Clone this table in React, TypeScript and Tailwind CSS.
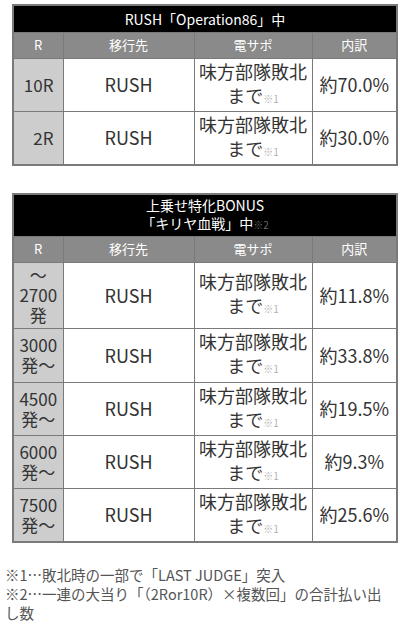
import React from "react";

const font = { fontFamily: '"Noto Sans CJK JP", "Noto Sans", sans-serif' };

function Note({ n }: { n: string }) {
  return <span className="text-[10px] text-[#b0b0b0] align-baseline">※{n}</span>;
}

function Cols() {
  return (
    <colgroup>
      <col className="w-[50px]" />
      <col className="w-[131px]" />
      <col className="w-[118px]" />
      <col className="w-[85px]" />
    </colgroup>
  );
}

function HeaderRow() {
  return (
    <tr className="h-[26px] bg-[#8a8a8a] text-white text-[13px] leading-[16px]">
      <th className="border border-[#7a7a7a] font-normal">R</th>
      <th className="border border-[#7a7a7a] font-normal">移行先</th>
      <th className="border border-[#7a7a7a] font-normal">電サポ</th>
      <th className="border border-[#7a7a7a] font-normal">内訳</th>
    </tr>
  );
}

function Row({ r, pct, h, rAlign }: { r: React.ReactNode; pct: string; h: string; rAlign?: string }) {
  return (
    <tr className={h}>
      <td className={`border border-[#7a7a7a] bg-[#cdcdcd] text-[17px] leading-[20px] text-[#333] whitespace-nowrap ${rAlign ?? "text-center"}`}>{r}</td>
      <td className="border border-[#7a7a7a] bg-white text-center text-[18px] text-[#333]">RUSH</td>
      <td className="border border-[#7a7a7a] bg-white text-center text-[18px] leading-[24px] text-[#333] whitespace-nowrap">
        味方部隊敗北
        <br />
        まで<Note n="1" />
      </td>
      <td className="border border-[#7a7a7a] bg-white text-center text-[18px] text-[#333] whitespace-nowrap">{pct}</td>
    </tr>
  );
}

export default function App() {
  return (
    <div className="w-[400px] h-[628px] bg-white overflow-hidden pt-[4px]" style={font}>
      <table className="ml-[12px] w-[384px] border-collapse border-2 border-[#7a7a7a] table-fixed">
        <Cols />
        <tbody>
          <tr className="h-[27px] bg-black text-white text-[14px] leading-[18px]">
            <td colSpan={4} className="text-center border border-[#7a7a7a]">RUSH「Operation86」中</td>
          </tr>
          <HeaderRow />
          <Row r="10R" pct="約70.0%" h="h-[52px]" rAlign="text-right pr-[9px]" />
          <Row r="2R" pct="約30.0%" h="h-[54px]" rAlign="text-right pr-[9px]" />
        </tbody>
      </table>

      <table className="ml-[12px] mt-[27px] w-[384px] border-collapse border-2 border-[#7a7a7a] table-fixed">
        <Cols />
        <tbody>
          <tr className="h-[42px] bg-black text-white text-[14px] leading-[18px]">
            <td colSpan={4} className="text-center border border-[#7a7a7a]">
              上乗せ特化BONUS
              <br />
              「キリヤ血戦」中<span className="text-[10px] text-[#666]">※2</span>
            </td>
          </tr>
          <HeaderRow />
          <Row r={<>～<br />2700<br />発</>} pct="約11.8%" h="h-[66px]" />
          <Row r={<>3000<br />発～</>} pct="約33.8%" h="h-[54px]" />
          <Row r={<>4500<br />発～</>} pct="約19.5%" h="h-[52px]" />
          <Row r={<>6000<br />発～</>} pct="約9.3%" h="h-[52px]" />
          <Row r={<>7500<br />発～</>} pct="約25.6%" h="h-[54px]" />
        </tbody>
      </table>

      <div className="mt-[22px] pl-[5px] pr-[2px] text-[14.5px] leading-[19px] text-[#555]">
        <p>※1…敗北時の一部で「LAST JUDGE」突入</p>
        <p>
          ※2…一連の大当り「（2Ror10R）×複数回」の合計払い出
          <br />
          し数
        </p>
      </div>
    </div>
  );
}
